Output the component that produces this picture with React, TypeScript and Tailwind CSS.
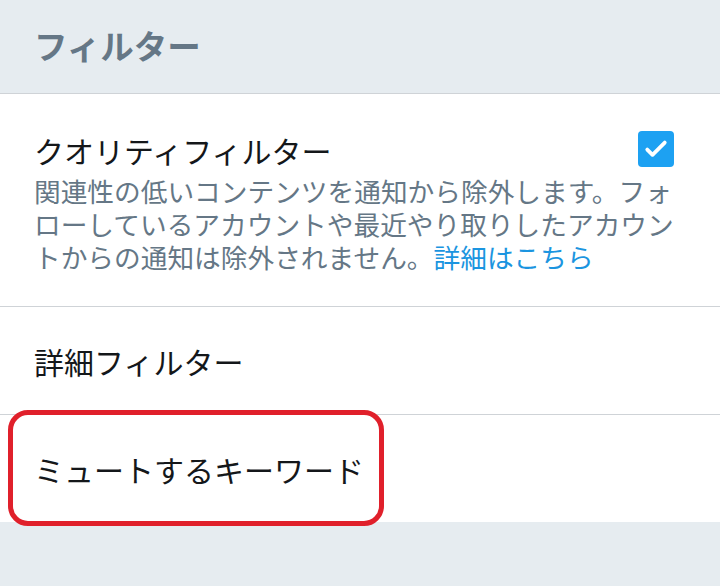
export default function App() {
  const font = { fontFamily: '"Noto Sans CJK JP", "Noto Sans", sans-serif' };
  return (
    <div className="w-[720px] h-[586px] bg-[#e6ecf0] relative overflow-hidden" style={font}>
      <div className="h-[94px] flex items-center pl-[34px] pb-[4px] border-b border-[#cfd3d7]">
        <span className="text-[33.5px] font-bold text-[#657786] leading-none">フィルター</span>
      </div>
      <div className="bg-white">
        <div className="pl-[34px] pr-[36px] pt-[38px] pb-[33px] border-b border-[#cfd3d7]">
          <div className="flex items-start justify-between pr-[10px]">
            <span className="text-[30px] leading-[36px] text-[#14171a]">クオリティフィルター</span>
            <div className="w-[36px] h-[36px] rounded-[4px] bg-[#1da1f2] flex items-center justify-center -mt-[1px]">
              <svg width="28" height="28" viewBox="0 0 24 24" fill="none">
                <path d="M4.5 12.5l4.5 4.5L19.5 6.5" stroke="white" strokeWidth="3.2" strokeLinecap="round" strokeLinejoin="round" />
              </svg>
            </div>
          </div>
          <p className="text-[26.7px] leading-[33px] text-[#657786] mt-[6px]">
            関連性の低いコンテンツを通知から除外します。フォローしているアカウントや最近やり取りしたアカウントからの通知は除外されません。<span className="text-[#1b95e0]">詳細はこちら</span>
          </p>
        </div>
        <div className="h-[108px] flex items-center pl-[34px] border-b border-[#cfd3d7]">
          <span className="text-[30px] text-[#14171a] leading-none">詳細フィルター</span>
        </div>
        <div className="h-[107px] flex items-center pl-[34px]">
          <span className="text-[30px] text-[#14171a] leading-none">ミュートするキーワード</span>
        </div>
      </div>
      <div className="absolute left-[8px] top-[410px] w-[376px] h-[116px] border-[5px] border-[#e0202b] rounded-[20px]" />
    </div>
  );
}
